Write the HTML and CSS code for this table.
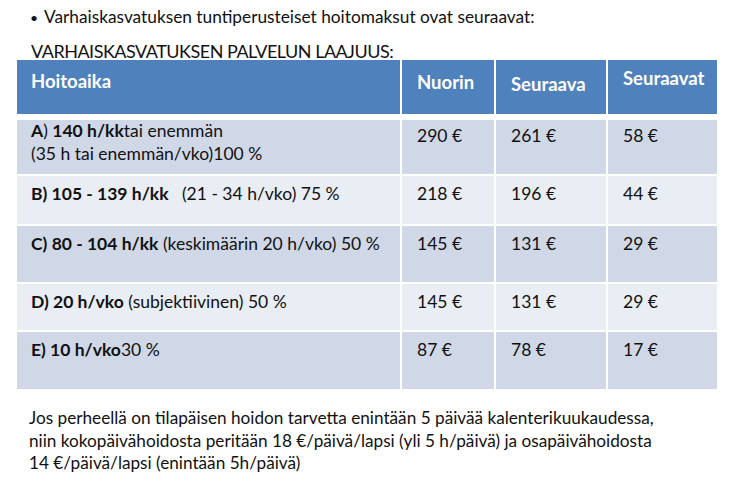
FILE: index.html
```html
<!DOCTYPE html>
<html lang="fi">
<head>
<meta charset="utf-8">
<link rel="stylesheet" href="styles.css">
</head>
<body>
<div class="page">
  <p class="bullet"><span class="dot">•</span>Varhaiskasvatuksen tuntiperusteiset hoitomaksut ovat seuraavat:</p>
  <p class="title">VARHAISKASVATUKSEN PALVELUN LAAJUUS:</p>
  <table class="fees">
    <thead>
      <tr>
        <th class="c-label">Hoitoaika</th>
        <th class="h-nuorin">Nuorin</th>
        <th class="h-seuraava">Seuraava</th>
        <th class="h-seuraavat">Seuraavat</th>
      </tr>
    </thead>
    <tbody>
      <tr class="odd r-a">
        <td class="c-label two"><b>A</b>) <b>140 h/kk</b>tai enemmän<br>(35 h tai enemmän/vko)100 %</td>
        <td class="price">290 €</td><td class="price">261 €</td><td class="price">58 €</td>
      </tr>
      <tr class="even r-b">
        <td class="c-label"><b>B) 105 - 139 h/kk</b> &nbsp; (21 - 34 h/vko) 75 %</td>
        <td class="price">218 €</td><td class="price">196 €</td><td class="price">44 €</td>
      </tr>
      <tr class="odd r-c">
        <td class="c-label"><b>C) 80 - 104 h/kk</b> (keskimäärin 20 h/vko) 50 %</td>
        <td class="price">145 €</td><td class="price">131 €</td><td class="price">29 €</td>
      </tr>
      <tr class="even r-d">
        <td class="c-label"><b>D) 20 h/vko</b> (subjektiivinen) 50 %</td>
        <td class="price">145 €</td><td class="price">131 €</td><td class="price">29 €</td>
      </tr>
      <tr class="odd r-e">
        <td class="c-label"><b>E) 10 h/vko</b>30 %</td>
        <td class="price">87 €</td><td class="price">78 €</td><td class="price">17 €</td>
      </tr>
    </tbody>
  </table>
  <p class="note">Jos perheellä on tilapäisen hoidon tarvetta enintään 5 päivää kalenterikuukaudessa,<br>niin kokopäivähoidosta peritään 18 €/päivä/lapsi (yli 5 h/päivä) ja osapäivähoidosta<br>14 €/päivä/lapsi (enintään 5h/päivä)</p>
</div>
</body>
</html>
```
FILE: styles.css
```css
html, body {
  margin: 0;
  padding: 0;
  background: #ffffff;
}
body {
  width: 730px;
  height: 486px;
  overflow: hidden;
  font-family: Lato, "Open Sans", sans-serif;
  color: #111111;
}
.page {
  padding: 0 0 0 15px;
}
.bullet {
  margin: 0;
  padding: 6px 0 0 15px;
  font-size: 17.3px;
  line-height: 22px;
  height: 30px;
  box-sizing: border-box;
}
.dot {
  display: inline-block;
  width: 14px;
  font-size: 14px;
}
.title {
  margin: 0;
  padding: 11px 0 0 16px;
  font-size: 18px;
  letter-spacing: -0.5px;
  line-height: 20px;
  height: 30px;
  box-sizing: border-box;
}
.fees {
  border-collapse: separate;
  border-spacing: 2px;
  margin: -2px 0 0 0;
  table-layout: fixed;
  width: 704px;
}
.fees th, .fees td {
  padding: 7px 0 0 15px;
  vertical-align: top;
  text-align: left;
  box-sizing: border-box;
}
.fees th {
  background: #4f81bd;
  color: #ffffff;
  font-weight: 700;
  font-size: 18.5px;
  line-height: 22px;
  padding-top: 10px;
  border-bottom: 4px solid #ffffff;
  height: 58px;
}
.fees th.c-label { width: 383px; padding-left: 14px; }
.fees th.h-nuorin { width: 92px; padding-top: 11px; }
.fees th.h-seuraava { width: 110px; padding-top: 13px; }
.fees th.h-seuraavat { width: 109px; padding-top: 7px; }
.fees td {
  font-size: 17.5px;
  line-height: 22.5px;
}
.fees td.c-label { padding-left: 14px; }
.fees td.two { padding-top: 0; }
.fees b { font-weight: 700; }
.odd td { background: #d0d8e8; }
.even td { background: #e9edf4; }
.r-a td { height: 54px; }
.r-a td.price { padding-top: 5px; }
.r-b td { height: 48px; }
.r-c td { height: 56px; }
.r-d td { height: 46px; }
.r-e td { height: 57px; }
.note {
  margin: 0;
  padding: 16px 0 0 14px;
  font-size: 17.2px;
  line-height: 22.5px;
}
```
